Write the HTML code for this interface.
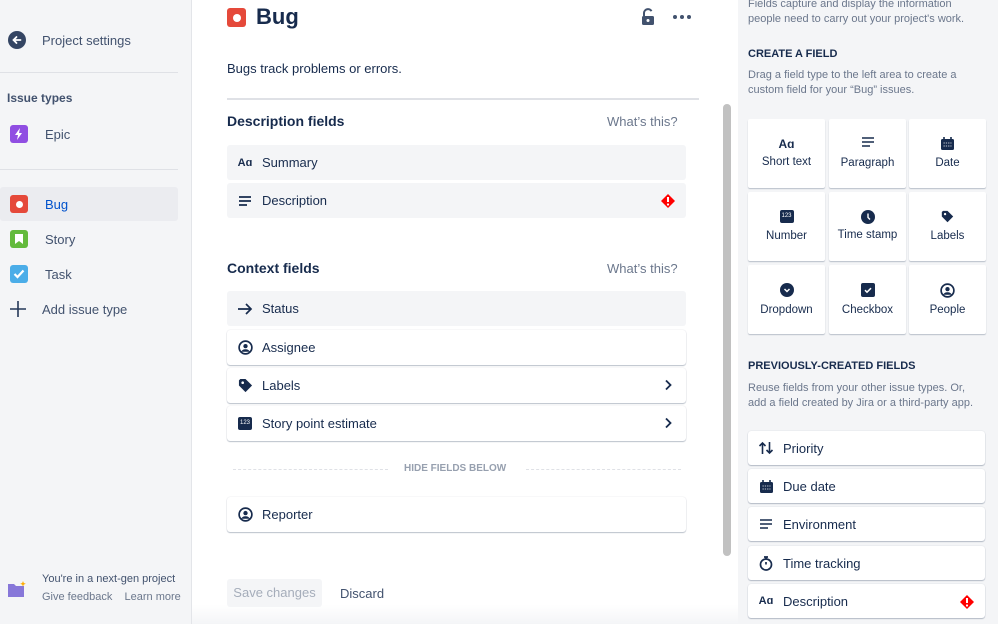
<!DOCTYPE html>
<html><head><meta charset="utf-8"><style>
*{box-sizing:border-box;margin:0;padding:0}
body{width:998px;height:624px;overflow:hidden;font-family:"Liberation Sans",sans-serif;color:#172b4d;position:relative;background:#fff}
.a{position:absolute}
.side{left:0;top:0;width:192px;height:624px;background:#f4f5f7;border-right:1px solid #e3e5e9}
.right{left:738px;top:0;width:260px;height:624px;background:#f4f5f7}
.t13{font-size:13px}
.nav{left:0;width:178px;height:34px;font-size:13px;color:#42526e;display:flex;align-items:center}
.nav .ic{width:18px;height:18px;border-radius:3px;margin-left:10px;margin-right:17px;display:flex;align-items:center;justify-content:center}
.row{left:227px;width:459px;height:35px;border-radius:3px;font-size:13px;display:flex;align-items:center;padding-left:10px}
.g{background:#f4f5f7}
.w{background:#fff;box-shadow:0 1px 1px rgba(9,30,66,.25),0 0 1px rgba(9,30,66,.2)}
.row .i{width:16px;height:16px;margin-right:9px;display:flex;align-items:center;justify-content:center}
.chev{position:absolute;right:14px;top:11px}
.card{width:77px;height:69px;background:#fff;box-shadow:0 1px 1px rgba(9,30,66,.25);border-radius:2px;font-size:11.5px;text-align:center}
.card svg{margin-top:18px;display:block;margin-left:auto;margin-right:auto}
.card span{display:block;margin-top:8px}
.li{left:748px;width:237px;height:34px;background:#fff;border-radius:3px;box-shadow:0 1px 1px rgba(9,30,66,.25),0 0 1px rgba(9,30,66,.2);font-size:13px;display:flex;align-items:center;padding-left:10px}
.li .i{width:16px;height:16px;margin-right:9px;display:flex;align-items:center;justify-content:center}
.sub{font-size:11px;color:#6b778c;line-height:15px}
.h{font-size:11px;font-weight:bold;color:#172b4d}
</style></head><body>
<div class="a side">
 <div class="a" style="left:8px;top:31px;width:18px;height:18px;border-radius:50%;background:#344563"><svg width="18" height="18" viewBox="0 0 18 18"><path d="M12.5 9H6M8.5 6L5.5 9l3 3" stroke="#fff" stroke-width="1.8" fill="none" stroke-linecap="round"/></svg></div>
 <div class="a t13" style="left:42px;top:33px;color:#42526e">Project settings</div>
 <div class="a" style="left:0;top:72px;width:178px;height:1px;background:#dfe1e6"></div>
 <div class="a" style="left:7px;top:91px;font-size:12px;font-weight:bold;color:#42526e">Issue types</div>
 <div class="a nav" style="top:117px"><div class="ic" style="background:#904ee2"><svg width="10" height="12" viewBox="0 0 10 12"><path d="M6 0L1 7h3l-1 5 5-7H5z" fill="#fff"/></svg></div>Epic</div>
 <div class="a" style="left:0;top:169px;width:178px;height:1px;background:#dfe1e6"></div>
 <div class="a nav" style="top:187px;background:#ebecf0;border-radius:3px;color:#0052cc"><div class="ic" style="background:#e5493a"><div style="width:7px;height:7px;border-radius:50%;background:#fff"></div></div>Bug</div>
 <div class="a nav" style="top:222px"><div class="ic" style="background:#63ba3c"><svg width="8" height="10" viewBox="0 0 8 10"><path d="M0 0h8v10L4 7 0 10z" fill="#fff"/></svg></div>Story</div>
 <div class="a nav" style="top:257px"><div class="ic" style="background:#4bade8"><svg width="12" height="10" viewBox="0 0 12 10"><path d="M1.5 5l3 3 6-6.5" stroke="#fff" stroke-width="2.2" fill="none"/></svg></div>Task</div>
 <div class="a nav" style="top:292px"><svg style="margin-left:9px;margin-right:15px" width="18" height="18" viewBox="0 0 18 18"><path d="M9 1v16M1 9h16" stroke="#253858" stroke-width="1.6"/></svg>Add issue type</div>
 <svg class="a" style="left:7px;top:580px" width="20" height="18" viewBox="0 0 20 18"><path d="M1 4h6l2 2h8v11H1z" fill="#8777d9"/><path d="M19 1l.8 2 2 .8-2 .8-.8 2-.8-2-2-.8 2-.8z" fill="#ffab00" transform="translate(-3,0)"/></svg>
 <div class="a" style="left:42px;top:573px;font-size:11px;color:#42526e">You're in a next-gen project</div>
 <div class="a" style="left:42px;top:591px;font-size:11px;color:#6b778c">Give feedback &nbsp;&nbsp;&nbsp;Learn more</div>
</div>

<div class="a" style="left:227px;top:8px;width:19px;height:19px;border-radius:3px;background:#e5493a;display:flex;align-items:center;justify-content:center"><div style="width:8px;height:8px;border-radius:50%;background:#fff"></div></div>
<div class="a" style="left:256px;top:4px;font-size:22px;font-weight:bold;color:#172b4d">Bug</div>
<svg class="a" style="left:640px;top:8px" width="16" height="18" viewBox="0 0 16 18"><path d="M4 8V5a4 4 0 0 1 7.5-1.8" stroke="#42526e" stroke-width="2" fill="none"/><rect x="2" y="8" width="12" height="9" rx="1.5" fill="#42526e"/><circle cx="8" cy="12.5" r="1.5" fill="#fff"/></svg>
<div class="a" style="left:673px;top:15px;display:flex;gap:3px"><i style="width:4px;height:4px;border-radius:50%;background:#42526e"></i><i style="width:4px;height:4px;border-radius:50%;background:#42526e"></i><i style="width:4px;height:4px;border-radius:50%;background:#42526e"></i></div>
<div class="a t13" style="left:227px;top:61px">Bugs track problems or errors.</div>
<div class="a" style="left:227px;top:98px;width:472px;height:2px;background:#dfe1e6"></div>
<div class="a" style="left:227px;top:113px;font-size:14px;font-weight:bold">Description fields</div>
<div class="a t13" style="left:607px;top:114px;color:#6b778c">What’s this?</div>
<div class="a row g" style="top:145px"><div class="i" style="font-size:11px;font-weight:bold">Aɑ</div>Summary</div>
<div class="a row g" style="top:183px"><div class="i"><svg width="14" height="12" viewBox="0 0 14 12"><path d="M1 2h12M1 6h12M1 10h8" stroke="#172b4d" stroke-width="1.8"/></svg></div>Description
 <svg class="chev" style="top:10px;right:10px" width="16" height="16" viewBox="0 0 16 16"><path d="M8 1l7 7-7 7-7-7z" fill="#f00"/><path d="M8 4v5" stroke="#fff" stroke-width="2"/><circle cx="8" cy="11.5" r="1.1" fill="#fff"/></svg></div>
<div class="a" style="left:227px;top:260px;font-size:14px;font-weight:bold">Context fields</div>
<div class="a t13" style="left:607px;top:261px;color:#6b778c">What’s this?</div>
<div class="a row g" style="top:291px"><div class="i"><svg width="16" height="14" viewBox="0 0 16 14"><path d="M1 7h13M9 2l5 5-5 5" stroke="#172b4d" stroke-width="1.7" fill="none"/></svg></div>Status</div>
<div class="a row w" style="top:330px"><div class="i"><svg width="15" height="15" viewBox="0 0 16 16"><circle cx="8" cy="8" r="6.8" fill="none" stroke="#172b4d" stroke-width="1.8"/><circle cx="8" cy="6.5" r="2.3" fill="#172b4d"/><path d="M3.5 12.5c1-2 2.5-2.6 4.5-2.6s3.5.6 4.5 2.6" fill="#172b4d"/></svg></div>Assignee</div>
<div class="a row w" style="top:368px"><div class="i"><svg width="15" height="15" viewBox="0 0 16 16"><path d="M1 2.5V8l7 7 7-7-7-7H2.5z" fill="#172b4d"/><circle cx="5" cy="5" r="1.4" fill="#fff"/></svg></div>Labels<svg class="chev" width="8" height="12" viewBox="0 0 8 12"><path d="M2 1.5l4.5 4.5L2 10.5" stroke="#172b4d" stroke-width="1.8" fill="none"/></svg></div>
<div class="a row w" style="top:406px"><div class="i"><div style="width:14px;height:13px;background:#172b4d;border-radius:2px;color:#fff;font-size:6px;line-height:13px;text-align:center">123</div></div>Story point estimate<svg class="chev" width="8" height="12" viewBox="0 0 8 12"><path d="M2 1.5l4.5 4.5L2 10.5" stroke="#172b4d" stroke-width="1.8" fill="none"/></svg></div>
<div class="a" style="left:233px;top:469px;width:155px;border-top:1px dashed #dfe1e6"></div>
<div class="a" style="left:404px;top:463px;font-size:10px;font-weight:bold;color:#97a0af">HIDE FIELDS BELOW</div>
<div class="a" style="left:526px;top:469px;width:155px;border-top:1px dashed #dfe1e6"></div>
<div class="a row w" style="top:497px"><div class="i"><svg width="15" height="15" viewBox="0 0 16 16"><circle cx="8" cy="8" r="6.8" fill="none" stroke="#172b4d" stroke-width="1.8"/><circle cx="8" cy="6.5" r="2.3" fill="#172b4d"/><path d="M3.5 12.5c1-2 2.5-2.6 4.5-2.6s3.5.6 4.5 2.6" fill="#172b4d"/></svg></div>Reporter</div>
<div class="a" style="left:723px;top:104px;width:8px;height:452px;border-radius:4px;background:#c1c1c1"></div>
<div class="a" style="left:192px;top:560px;width:546px;height:64px;background:linear-gradient(#fff,#fff 70%,#f4f5f7)"></div>
<div class="a t13" style="left:227px;top:579px;width:95px;height:28px;background:#f4f5f7;border-radius:3px;color:#a5adba;line-height:28px;text-align:center">Save changes</div>
<div class="a t13" style="left:340px;top:586px;color:#42526e">Discard</div>

<div class="a right">
 <div class="a sub" style="left:10px;top:-3px">Fields capture and display the information<br>people need to carry out your project's work.</div>
 <div class="a h" style="left:10px;top:48px">CREATE A FIELD</div>
 <div class="a sub" style="left:10px;top:68px">Drag a field type to the left area to create a<br>custom field for your “Bug” issues.</div>
</div>
<div class="a card" style="left:748px;top:119px"><div style="margin-top:18px;font-size:12px;font-weight:bold">Aɑ</div><span style="margin-top:5px">Short text</span></div>
<div class="a card" style="left:829px;top:119px"><svg width="12" height="10" viewBox="0 0 12 10"><path d="M0 1h12M0 5h12M0 9h8" stroke="#172b4d" stroke-width="1.6"/></svg><span style="margin-top:10px">Paragraph</span></div>
<div class="a card" style="left:909px;top:119px"><svg width="13" height="13" viewBox="0 0 13 13"><rect x="0" y="2" width="13" height="11" rx="1.5" fill="#172b4d"/><path d="M3 0v3M10 0v3" stroke="#172b4d" stroke-width="1.6"/><path d="M2.5 6h8M2.5 9h8" stroke="#fff" stroke-width=".8" stroke-dasharray="1.3 1"/></svg><span style="margin-top:7px">Date</span></div>
<div class="a card" style="left:748px;top:192px"><div style="width:14px;height:13px;background:#172b4d;border-radius:2px;color:#fff;font-size:6px;line-height:13px;margin:18px auto 0">123</div><span style="margin-top:7px">Number</span></div>
<div class="a card" style="left:829px;top:192px"><svg width="14" height="14" viewBox="0 0 14 14"><circle cx="7" cy="7" r="7" fill="#172b4d"/><path d="M7 3.5V7.5l2 2" stroke="#fff" stroke-width="1.4" fill="none"/></svg><span style="margin-top:5px">Time stamp</span></div>
<div class="a card" style="left:909px;top:192px"><svg width="13" height="13" viewBox="0 0 16 16"><path d="M1 2.5V8l7 7 7-7-7-7H2.5z" fill="#172b4d"/><circle cx="5" cy="5" r="1.4" fill="#fff"/></svg><span style="margin-top:7px">Labels</span></div>
<div class="a card" style="left:748px;top:265px"><svg width="14" height="14" viewBox="0 0 14 14"><circle cx="7" cy="7" r="7" fill="#172b4d"/><path d="M4.5 6l2.5 2.5L9.5 6" stroke="#fff" stroke-width="1.5" fill="none"/></svg><span style="margin-top:7px">Dropdown</span></div>
<div class="a card" style="left:829px;top:265px"><svg width="14" height="14" viewBox="0 0 14 14"><rect width="14" height="14" rx="2" fill="#172b4d"/><path d="M4 7.2l2 2 4-4" stroke="#fff" stroke-width="1.5" fill="none"/></svg><span style="margin-top:7px">Checkbox</span></div>
<div class="a card" style="left:909px;top:265px"><svg width="15" height="15" viewBox="0 0 16 16"><circle cx="8" cy="8" r="6.8" fill="none" stroke="#172b4d" stroke-width="1.8"/><circle cx="8" cy="6.5" r="2.3" fill="#172b4d"/><path d="M3.5 12.5c1-2 2.5-2.6 4.5-2.6s3.5.6 4.5 2.6" fill="#172b4d"/></svg><span style="margin-top:6px">People</span></div>
<div class="a h" style="left:748px;top:360px">PREVIOUSLY-CREATED FIELDS</div>
<div class="a sub" style="left:748px;top:381px">Reuse fields from your other issue types. Or,<br>add a field created by Jira or a third-party app.</div>
<div class="a li" style="top:431px"><div class="i"><svg width="16" height="14" viewBox="0 0 16 14"><path d="M4.5 13V2M1.5 5l3-3 3 3M11.5 1v11M8.5 9l3 3 3-3" stroke="#172b4d" stroke-width="1.6" fill="none"/></svg></div>Priority</div>
<div class="a li" style="top:469px"><div class="i"><svg width="13" height="13" viewBox="0 0 13 13"><rect x="0" y="2" width="13" height="11" rx="1.5" fill="#172b4d"/><path d="M3 0v3M10 0v3" stroke="#172b4d" stroke-width="1.6"/><path d="M2.5 6h8M2.5 9h8" stroke="#fff" stroke-width=".8" stroke-dasharray="1.3 1"/></svg></div>Due date</div>
<div class="a li" style="top:507px"><div class="i"><svg width="12" height="10" viewBox="0 0 12 10"><path d="M0 1h12M0 5h12M0 9h8" stroke="#172b4d" stroke-width="1.6"/></svg></div>Environment</div>
<div class="a li" style="top:546px"><div class="i"><svg width="14" height="15" viewBox="0 0 14 15"><circle cx="7" cy="8.5" r="5.5" fill="none" stroke="#172b4d" stroke-width="1.7"/><path d="M5 1h4M7 1v2M7 8.5V6" stroke="#172b4d" stroke-width="1.7"/></svg></div>Time tracking</div>
<div class="a li" style="top:584px"><div class="i" style="font-size:11px;font-weight:bold">Aɑ</div>Description<svg class="a" style="right:10px;top:10px" width="16" height="16" viewBox="0 0 16 16"><path d="M8 1l7 7-7 7-7-7z" fill="#f00"/><path d="M8 4v5" stroke="#fff" stroke-width="2"/><circle cx="8" cy="11.5" r="1.1" fill="#fff"/></svg></div>
</body></html>
